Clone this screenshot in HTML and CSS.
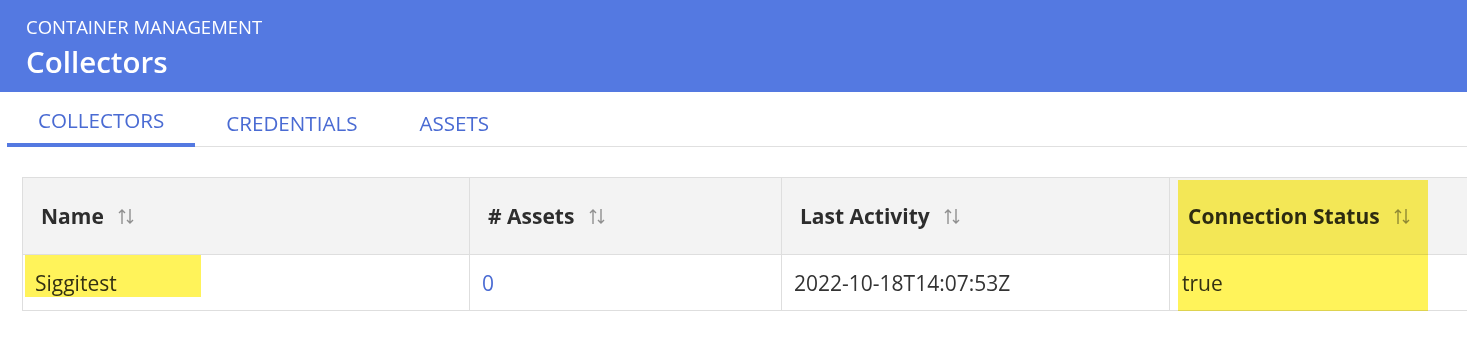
FILE: index.html
```html
<!DOCTYPE html>
<html lang="en">
<head>
    <meta charset="UTF-8">
    <title>Collectors</title>
    <link rel="stylesheet" href="styles.css">
</head>
<body>
    <div class="page-header">
        <div class="section">CONTAINER MANAGEMENT</div>
        <h1 class="title">Collectors</h1>
    </div>

    <div class="tabs">
        <div class="tab active">COLLECTORS</div>
        <div class="tab">CREDENTIALS</div>
        <div class="tab">ASSETS</div>
        <div class="tab-rest"></div>
    </div>

    <div class="table-wrap">
        <table class="grid">
            <colgroup>
                <col class="col-name">
                <col class="col-assets">
                <col class="col-activity">
                <col class="col-status">
            </colgroup>
            <thead>
                <tr>
                    <th>Name <span class="sort"><svg width="16" height="17" viewBox="0 0 16 17"><path d="M4 16V2M1 5l3-3 3 3M12 1v14M9 12l3 3 3-3" fill="none" stroke="currentColor" stroke-width="1.4"/></svg></span></th>
                    <th># Assets <span class="sort"><svg width="16" height="17" viewBox="0 0 16 17"><path d="M4 16V2M1 5l3-3 3 3M12 1v14M9 12l3 3 3-3" fill="none" stroke="currentColor" stroke-width="1.4"/></svg></span></th>
                    <th>Last Activity <span class="sort"><svg width="16" height="17" viewBox="0 0 16 17"><path d="M4 16V2M1 5l3-3 3 3M12 1v14M9 12l3 3 3-3" fill="none" stroke="currentColor" stroke-width="1.4"/></svg></span></th>
                    <th>Connection Status <span class="sort"><svg width="16" height="17" viewBox="0 0 16 17"><path d="M4 16V2M1 5l3-3 3 3M12 1v14M9 12l3 3 3-3" fill="none" stroke="currentColor" stroke-width="1.4"/></svg></span></th>
                </tr>
            </thead>
            <tbody>
                <tr>
                    <td>Siggitest</td>
                    <td><a class="link" href="#">0</a></td>
                    <td>2022-10-18T14:07:53Z</td>
                    <td>true</td>
                </tr>
            </tbody>
        </table>
        <!-- marker highlights drawn over the screenshot -->
        <div class="marker marker-name"></div>
        <div class="marker marker-status"></div>
    </div>
</body>
</html>
```

FILE: styles.css
```css
html {
    overflow: hidden;
}
body {
    margin: 0;
    font-family: "Open Sans", "Noto Sans", sans-serif;
    color: #333;
    background: #fff;
}
.page-header {
    background-color: #5479e1;
    color: #fff;
    height: 92px;
    box-sizing: border-box;
    padding: 15px 26px 0;
}
.section {
    font-size: 18.5px;
    line-height: 24px;
}
.title {
    margin: 1px 0 0;
    font-size: 29.5px;
    font-weight: 600;
    line-height: 44px;
}
.tabs {
    display: flex;
    padding-left: 7px;
    height: 55px;
}
.tab {
    padding: 19px 31px 0;
    font-size: 20.6px;
    line-height: 24px;
    color: #4a6bd3;
    border-bottom: 1px solid #e0e0e0;
    box-sizing: border-box;
}
.tab.active {
    border-bottom: 4px solid #5479e1;
    padding-top: 16px;
}
.tab-rest {
    flex: 1;
    border-bottom: 1px solid #e0e0e0;
}
.table-wrap {
    position: relative;
    margin: 30px 0 0 22px;
}
.grid {
    border-collapse: collapse;
    width: 1460px;
    font-size: 21px;
    table-layout: fixed;
}
.col-name { width: 447px; }
.col-assets { width: 312px; }
.col-activity { width: 388px; }
.col-status { width: 313px; }
.grid th,
.grid td {
    border: 1px solid #dedede;
    text-align: left;
}
.grid th {
    background: #f3f3f3;
    height: 76px;
    padding: 0 18px;
    font-weight: 700;
    color: #2d2d2d;
}
.grid td {
    height: 55px;
    padding: 0 12px;
    color: #333;
}
.sort {
    color: #8f8f8f;
    margin-left: 9px;
    vertical-align: -1px;
}
.link {
    color: #4a6bd3;
    text-decoration: none;
}
.marker {
    position: absolute;
    background: #fff35a;
    mix-blend-mode: multiply;
}
.marker-name {
    left: 3px;
    top: 78px;
    width: 176px;
    height: 42px;
}
.marker-status {
    left: 1156px;
    top: 3px;
    width: 250px;
    height: 131px;
}
```
